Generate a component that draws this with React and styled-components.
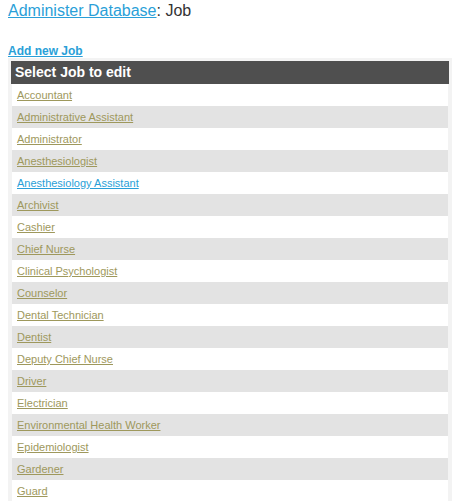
import React from "react";
import styled, { createGlobalStyle } from "styled-components";

const GlobalStyle = createGlobalStyle`
  body {
    margin: 0;
    padding: 0 3px 0 8px;
    background: #ffffff;
    font-family: "Liberation Sans", Arial, sans-serif;
  }
`;

const Title = styled.h1`
  margin: 0;
  padding-top: 1px;
  font-size: 16px;
  font-weight: normal;
  line-height: 20px;
  color: #333333;
`;

const TitleLink = styled.a`
  color: #2a9fd8;
  text-decoration: underline;
`;

const AddRow = styled.div`
  margin-top: 20px;
  height: 17px;
`;

const AddLink = styled.a`
  font-size: 12px;
  font-weight: bold;
  line-height: 14px;
  color: #2a9fd8;
  text-decoration: underline;
`;

const Box = styled.div`
  background: #f3f3f3;
  padding: 3px 3px 0 3px;
`;

const Header = styled.div`
  background: #4f4f4f;
  color: #ffffff;
  font-size: 14px;
  font-weight: bold;
  line-height: 23px;
  padding-left: 4px;
`;

const Row = styled.div`
  height: 22px;
  line-height: 22px;
  margin: 0 1px;
  padding-left: 5px;
  font-size: 11px;
  background: ${({ $alt }) => ($alt ? "#e3e3e3" : "#ffffff")};
`;

const JobLink = styled.a`
  color: ${({ $active }) => ($active ? "#2a9fd8" : "#9e985c")};
  text-decoration: underline;
`;

const jobs = [
  "Accountant",
  "Administrative Assistant",
  "Administrator",
  "Anesthesiologist",
  "Anesthesiology Assistant",
  "Archivist",
  "Cashier",
  "Chief Nurse",
  "Clinical Psychologist",
  "Counselor",
  "Dental Technician",
  "Dentist",
  "Deputy Chief Nurse",
  "Driver",
  "Electrician",
  "Environmental Health Worker",
  "Epidemiologist",
  "Gardener",
  "Guard",
];

const App = () => {
  return (
    <>
      <GlobalStyle />
      <Title>
        <TitleLink href="#">Administer Database</TitleLink>: Job
      </Title>
      <AddRow>
        <AddLink href="#">Add new Job</AddLink>
      </AddRow>
      <Box>
        <Header>Select Job to edit</Header>
        {jobs.map((job, i) => (
          <Row key={job} $alt={i % 2 === 1}>
            <JobLink href="#" $active={job === "Anesthesiology Assistant"}>
              {job}
            </JobLink>
          </Row>
        ))}
      </Box>
    </>
  );
};

export default App;
